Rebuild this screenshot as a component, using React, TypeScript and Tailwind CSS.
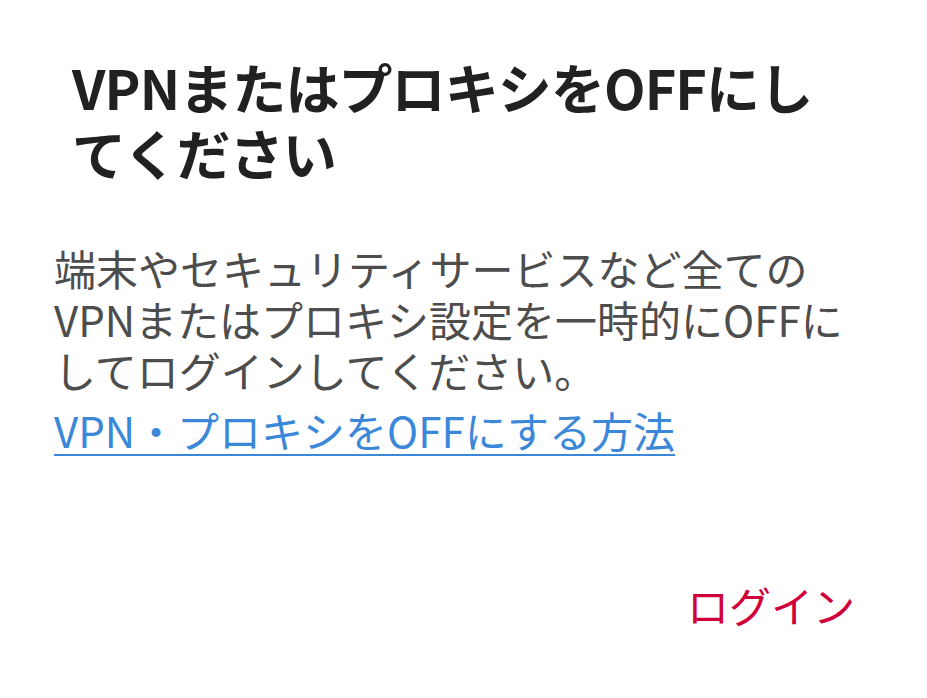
import React from 'react';

const jp = { fontFamily: '"Noto Sans CJK JP", "Noto Sans", sans-serif' };

export default function App() {
  return (
    <div className="min-h-[698px] w-[927px] bg-white flex flex-col" style={jp}>
      {/* Title */}
      <h1 className="pl-[72px] pr-[60px] pt-[54px] text-[54px] leading-[66px] font-bold text-[#212121] tracking-[-0.9px]">
        VPNまたはプロキシをOFFにし
        <br />
        てください
      </h1>

      {/* Body */}
      <div className="px-[54px] pt-[56px]">
        <p className="text-[42px] leading-[51px] text-[#4d4d4d]">
          端末やセキュリティサービスなど全ての
          <br />
          VPNまたはプロキシ設定を一時的にOFFに
          <br />
          してログインしてください。
        </p>
        <a
          href="#"
          className="mt-[9px] inline-block text-[42px] leading-[51px] text-[#3b88d9] underline decoration-[2px] underline-offset-[6px]"
        >
          VPN・プロキシをOFFにする方法
        </a>
      </div>

      {/* Actions */}
      <div className="flex justify-end pr-[72px] pt-[124px]">
        <button className="text-[42px] leading-[51px] text-[#d2003a]">ログイン</button>
      </div>
    </div>
  );
}
